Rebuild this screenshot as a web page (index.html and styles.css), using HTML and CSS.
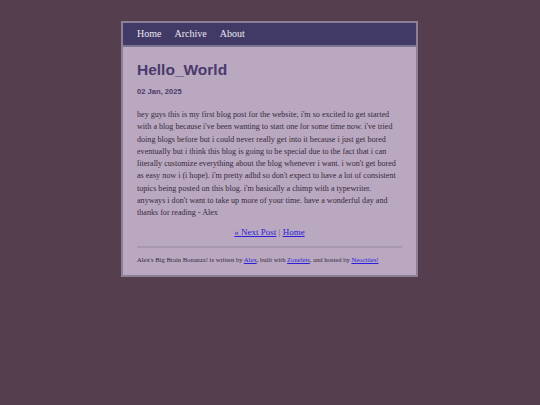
FILE: index.html
```html
<!DOCTYPE html>
<html>
<head>
<meta charset="utf-8">
<link rel="stylesheet" href="styles.css">
</head>
<body>
<div class="page">
  <nav class="nav">
    <a href="#">Home</a>
    <a href="#">Archive</a>
    <a href="#">About</a>
  </nav>
  <main class="content">
    <h1 class="title">Hello_World</h1>
    <p class="date">02 Jan, 2025</p>
    <p class="post">hey guys this is my first blog post for the website, i'm so excited to get started with a blog because i've been wanting to start one for some time now. i've tried doing blogs before but i could never really get into it because i just get bored eventually but i think this blog is going to be special due to the fact that i can literally customize everything about the blog whenever i want. i won't get bored as easy now i (i hope). i'm pretty adhd so don't expect to have a lot of consistent topics being posted on this blog. i'm basically a chimp with a typewriter. anyways i don't want to take up more of your time. have a wonderful day and thanks for reading - Alex</p>
    <p class="pager"><a href="#">« Next Post</a> <span class="sep">|</span> <a href="#">Home</a></p>
    <hr class="rule">
    <p class="footer">Alex's Big Brain Bonanza! is written by <a href="#">Alex</a>, built with <a href="#">Zonelets</a>, and hosted by <a href="#">Neocities!</a></p>
  </main>
</div>
</body>
</html>
```
FILE: styles.css
```css
html, body {
  margin: 0;
  padding: 0;
}
body {
  background: #553f4f;
  font-family: "Liberation Serif", serif;
  padding-top: 21px;
}
.page {
  width: 293px;
  margin: 0 0 0 121px;
  border: 2px solid #8c7f96;
  background: #baa8c0;
}
.nav {
  background: #413a66;
  height: 22px;
  display: flex;
  align-items: center;
  gap: 13px;
  padding: 0 14px;
  border-bottom: 2px solid #7d7290;
}
.nav a {
  color: #ece6f2;
  text-decoration: none;
  font-size: 10px;
  line-height: 12px;
  margin-top: -1px;
}
.content {
  padding: 13px 14px 11px;
}
.title {
  margin: 0;
  font-family: "Liberation Sans", sans-serif;
  font-weight: bold;
  font-size: 15.5px;
  line-height: 20px;
  color: #4b3a6b;
}
.date {
  margin: 7px 0 0;
  font-family: "Liberation Sans", sans-serif;
  font-weight: bold;
  font-size: 7.6px;
  line-height: 10px;
  color: #4b3a6b;
}
.post {
  margin: 12px 0 0;
  max-width: 263px;
  font-size: 8.1px;
  line-height: 12.25px;
  color: #352a3a;
}
.pager {
  margin: 7px 0 0;
  text-align: center;
  font-size: 9px;
  line-height: 12px;
}
.pager a {
  color: #2b1fd9;
}
.sep {
  color: #6d6070;
}
.rule {
  margin: 8px 0 0;
  border: 0;
  height: 2px;
  background: #a898ae;
}
.footer {
  margin: 7px 0 0;
  font-size: 6.6px;
  line-height: 9px;
  color: #352a3a;
}
.footer a {
  color: #2b1fd9;
}
```
